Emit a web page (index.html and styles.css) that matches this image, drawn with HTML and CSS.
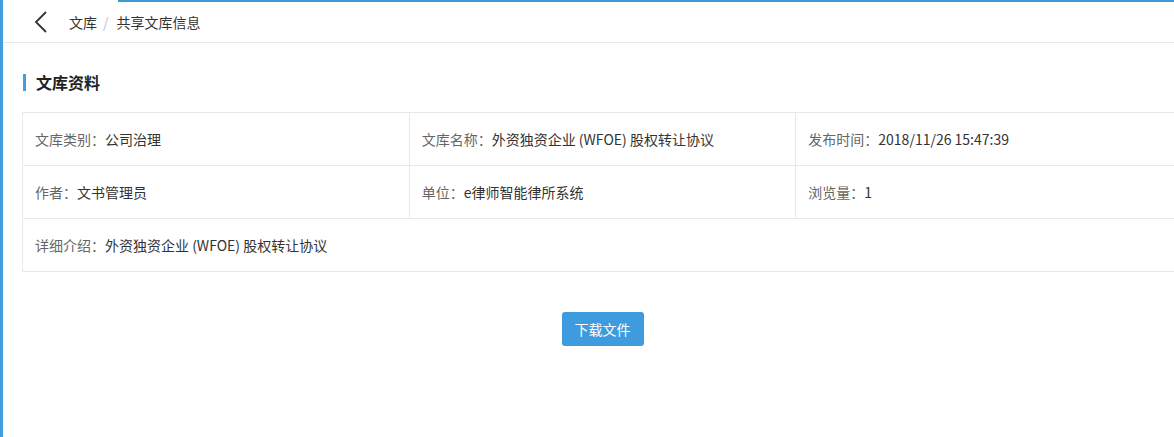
FILE: index.html
```html
<!DOCTYPE html>
<html lang="zh-CN">
<head>
    <meta charset="UTF-8">
    <meta name="viewport" content="width=device-width, initial-scale=1.0">
    <title>共享文库信息</title>
    <link rel="stylesheet" href="styles.css">
</head>
<body>
    <div class="page">
        <div class="side-bar"></div>
        <div class="main">
            <div class="top-line"></div>
            <div class="header">
                <a class="back" href="#">
                    <svg width="14" height="22" viewBox="0 0 14 22">
                        <path d="M12 1 L2 11 L12 21" fill="none" stroke="#333" stroke-width="1.8"/>
                    </svg>
                </a>
                <span class="crumb">文库</span>
                <span class="sep">/</span>
                <span class="crumb">共享文库信息</span>
            </div>
            <div class="content">
                <h2 class="section-title">文库资料</h2>
                <table class="info">
                    <tr>
                        <td><span class="label">文库类别：</span>公司治理</td>
                        <td><span class="label">文库名称：</span>外资独资企业 (WFOE) 股权转让协议</td>
                        <td><span class="label">发布时间：</span>2018/11/26 15:47:39</td>
                    </tr>
                    <tr>
                        <td><span class="label">作者：</span>文书管理员</td>
                        <td><span class="label">单位：</span>e律师智能律所系统</td>
                        <td><span class="label">浏览量：</span>1</td>
                    </tr>
                    <tr>
                        <td colspan="3"><span class="label">详细介绍：</span>外资独资企业 (WFOE) 股权转让协议</td>
                    </tr>
                </table>
                <div class="actions">
                    <button class="btn">下载文件</button>
                </div>
            </div>
        </div>
    </div>
</body>
</html>
```

FILE: styles.css
```css
body, html {
    font-family: "Noto Sans CJK SC", "Liberation Sans", sans-serif;
    margin: 0;
    padding: 0;
    background-color: #fff;
    overflow: hidden;
}
.page {
    display: flex;
    min-height: 437px;
}
.side-bar {
    width: 3px;
    flex-shrink: 0;
    background-color: #3f9fe0;
}
.main {
    flex: 1;
    min-width: 0;
}
.top-line {
    height: 2px;
    margin-left: 115px;
    background-color: #3f97d3;
}
.header {
    height: 40px;
    display: flex;
    align-items: center;
    border-bottom: 1px solid #e8e8e8;
    font-size: 14px;
    color: #333;
}
.back {
    display: flex;
    margin-left: 31px;
    margin-right: 21px;
}
.sep {
    color: #c0c4cc;
    margin: 0 8px 0 6px;
}
.content {
    padding: 0 0 0 19px;
}
.section-title {
    margin: 31px 0 21px 1px;
    padding-left: 10px;
    border-left: 3px solid #3f9fe0;
    font-size: 16px;
    line-height: 17px;
    font-weight: bold;
    color: #222;
}
.info {
    width: 1161px;
    border-collapse: collapse;
    table-layout: fixed;
    font-size: 14px;
    color: #333;
}
.info td {
    height: 52px;
    padding: 0 12px;
    border: 1px solid #e8e8e8;
    white-space: nowrap;
}
.label {
    color: #666;
}
.actions {
    width: 1161px;
    display: flex;
    justify-content: center;
    margin-top: 40px;
}
.btn {
    background-color: #3e9bde;
    color: white;
    border: none;
    width: 82px;
    height: 34px;
    border-radius: 3px;
    font-family: inherit;
    font-size: 14px;
    cursor: pointer;
}
```
